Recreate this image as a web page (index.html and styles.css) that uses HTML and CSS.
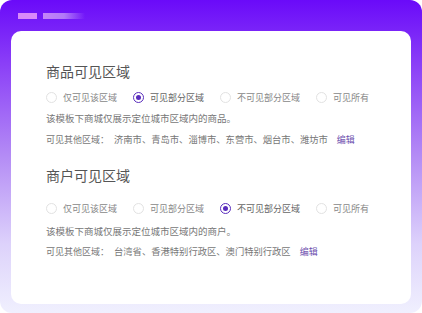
FILE: index.html
```html
<!DOCTYPE html>
<html lang="zh-CN">
<head>
    <meta charset="UTF-8">
    <title>可见区域</title>
    <link rel="stylesheet" href="styles.css">
</head>
<body>
    <div class="frame">
        <div class="tabs">
            <span class="tab tab-main"></span>
            <span class="tab tab-fade"></span>
        </div>
        <div class="card">
            <div class="section">
                <h2 class="title">商品可见区域</h2>
                <div class="radios">
                    <label class="radio"><span class="dot"></span>仅可见该区域</label>
                    <label class="radio checked"><span class="dot"></span>可见部分区域</label>
                    <label class="radio"><span class="dot"></span>不可见部分区域</label>
                    <label class="radio"><span class="dot"></span>可见所有</label>
                </div>
                <p class="desc">该模板下商城仅展示定位城市区域内的商品。</p>
                <p class="other">可见其他区域：<span class="value">济南市、青岛市、淄博市、东营市、烟台市、潍坊市</span><a class="edit">编辑</a></p>
            </div>
            <div class="section second">
                <h2 class="title">商户可见区域</h2>
                <div class="radios">
                    <label class="radio"><span class="dot"></span>仅可见该区域</label>
                    <label class="radio"><span class="dot"></span>可见部分区域</label>
                    <label class="radio checked"><span class="dot"></span>不可见部分区域</label>
                    <label class="radio"><span class="dot"></span>可见所有</label>
                </div>
                <p class="desc">该模板下商城仅展示定位城市区域内的商户。</p>
                <p class="other">可见其他区域：<span class="value">台湾省、香港特别行政区、澳门特别行政区</span><a class="edit">编辑</a></p>
            </div>
        </div>
    </div>
</body>
</html>
```

FILE: styles.css
```css
body {
    margin: 0;
    background: #fff;
    font-family: "Noto Sans CJK SC", "Noto Sans", sans-serif;
}
.frame {
    width: 422px;
    height: 313px;
    box-sizing: border-box;
    padding: 13px 11px 9px;
    border-radius: 12px;
    background: linear-gradient(180deg, #6a0af9 0%, #8a3ef7 20%, #b48cf5 50%, #ddd2fb 78%, #f0f0fe 100%);
}
.tabs {
    display: flex;
    gap: 6px;
    height: 6px;
    padding-left: 7px;
}
.tab {
    display: block;
    height: 6px;
}
.tab-main {
    width: 19px;
    background: #d98af9;
}
.tab-fade {
    width: 42px;
    background: linear-gradient(90deg, #c684f8, #b27af8 50%, rgba(150, 90, 250, 0));
}
.card {
    margin-top: 12px;
    height: 273px;
    box-sizing: border-box;
    padding: 30px 0 0 35px;
    background: #fff;
    border-radius: 10px;
}
.title {
    margin: 0;
    font-size: 14px;
    line-height: 20px;
    font-weight: 400;
    color: #555;
}
.radios {
    display: flex;
    gap: 16px;
    margin-top: 9.5px;
    height: 14px;
}
.radio {
    display: flex;
    align-items: center;
    gap: 6px;
    font-size: 9px;
    line-height: 14px;
    color: #888;
}
.dot {
    width: 11px;
    height: 11px;
    box-sizing: border-box;
    border: 1px solid #e2e2e2;
    border-radius: 50%;
    display: flex;
    align-items: center;
    justify-content: center;
}
.checked {
    color: #666;
}
.checked .dot {
    border-color: #5a2dbd;
}
.checked .dot::after {
    content: "";
    width: 5px;
    height: 5px;
    border-radius: 50%;
    background: #5a2dbd;
}
.desc, .other {
    margin: 6.5px 0 0;
    font-size: 9.5px;
    line-height: 14px;
    color: #777;
}
.other {
    font-size: 9px;
}
.value {
    margin-left: 5px;
    font-size: 9.3px;
}
.edit {
    margin-left: 9px;
    color: #6d4fae;
}
.second {
    margin-top: 18.5px;
}
.second .radios {
    margin-top: 16.5px;
}
.second .desc {
    margin-top: 8.5px;
}
.second .other {
    margin-top: 6px;
}
```
